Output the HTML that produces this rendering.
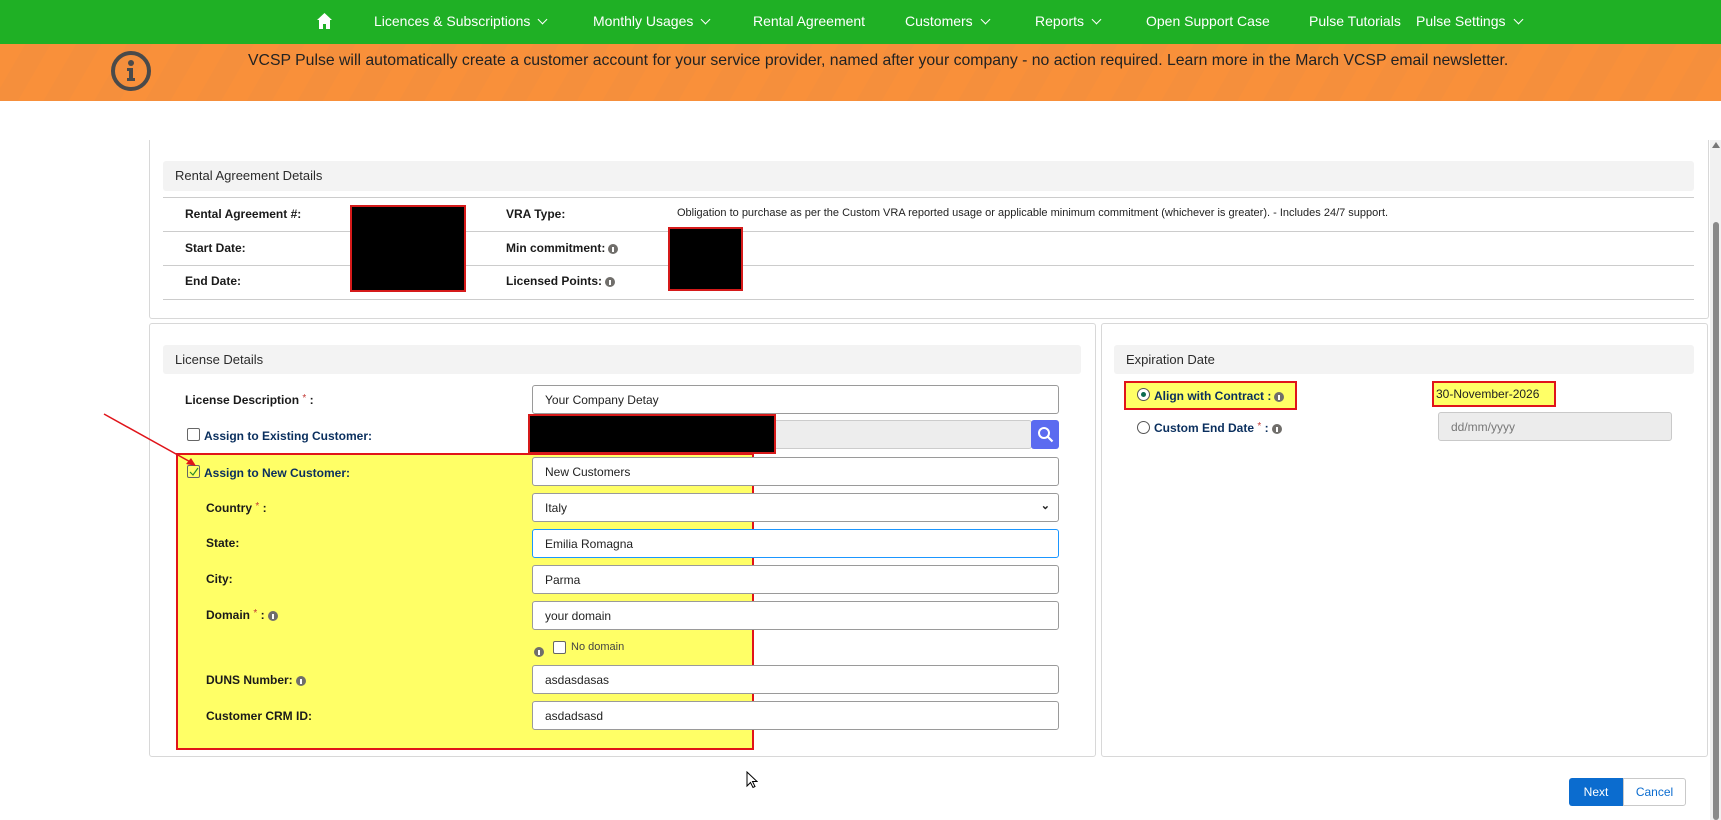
<!DOCTYPE html>
<html><head><meta charset="utf-8"><style>
*{box-sizing:border-box;margin:0;padding:0}
body{width:1721px;height:820px;position:relative;background:#fff;font-family:"Liberation Sans",sans-serif;overflow:hidden;color:#181818}
.a{position:absolute}
.nav{left:0;top:0;width:1721px;height:44px;background:#1fb025}
.nav span{position:absolute;top:13px;color:#fff;font-size:14px;white-space:nowrap}
.chev{display:inline-block;width:7px;height:7px;border-right:1.5px solid #fff;border-bottom:1.5px solid #fff;transform:rotate(45deg);margin-left:9px;position:relative;top:-3px}
.banner{left:0;top:44px;width:1721px;height:57px;background:repeating-linear-gradient(120deg,#f9903a 0 22px,#f58f3c 22px 44px)}
.panel{border:1px solid #d8d8d8;border-radius:3px;background:#fff}
.hdr{background:#f3f3f3;border-radius:3px;font-size:13px;color:#2b2b2b;padding-left:12px}
.lbl{font-size:12px;font-weight:bold;color:#1a1a1a;white-space:nowrap}
.blue{color:#0a2f5e}
.inp{left:532px;width:527px;height:29px;border:1px solid #9a9a9a;border-radius:3px;background:#fff;font-size:12px;padding:7px 12px;color:#222}
.line{height:1px;background:#ccc}
.req{color:#c23934;font-weight:normal;font-size:10px;vertical-align:top}
.i{display:inline-block;width:10px;height:10px;border-radius:50%;background:#706e6b;vertical-align:middle;margin-left:3px;position:relative}
.i:after{content:"";position:absolute;left:4px;top:3px;width:2px;height:5px;background:#fff}
.cb{width:13px;height:13px;border:1px solid #666;border-radius:2px;background:#fff}
</style></head><body>
<div class="a nav">
<svg class="a" style="left:317px;top:13px" width="15" height="16" viewBox="0 0 15 16"><path d="M7.5 0L0 7h2v9h4v-5h3v5h4V7h2z" fill="#fff"/></svg>
<span style="left:374px">Licences &amp; Subscriptions<i class="chev"></i></span>
<span style="left:593px">Monthly Usages<i class="chev"></i></span>
<span style="left:753px">Rental Agreement</span>
<span style="left:905px">Customers<i class="chev"></i></span>
<span style="left:1035px">Reports<i class="chev"></i></span>
<span style="left:1146px">Open Support Case</span>
<span style="left:1309px">Pulse Tutorials</span>
<span style="left:1416px">Pulse Settings<i class="chev"></i></span>
</div>
<div class="a banner"></div>
<svg class="a" style="left:110px;top:50px" width="42" height="42" viewBox="0 0 42 42"><circle cx="21" cy="21" r="18" fill="none" stroke="#4a4a4a" stroke-width="4"/><circle cx="21" cy="13" r="3" fill="#4a4a4a"/><path d="M17 18h6v10h2v3h-8v-3h2v-7h-2z" fill="#4a4a4a"/></svg>
<div class="a" style="left:248px;top:52px;font-size:15.8px;color:#222;white-space:nowrap">VCSP Pulse will automatically create a customer account for your service provider, named after your company - no action required. Learn more in the March VCSP email newsletter.</div>

<div class="a" style="left:1710px;top:140px;width:11px;height:680px;background:#f1f1f1"></div>
<div class="a" style="left:1713px;top:222px;width:6px;height:598px;background:#8a8a8a;border-radius:3px"></div>
<div class="a" style="left:1712px;top:142px;width:0;height:0;border-left:4px solid transparent;border-right:4px solid transparent;border-bottom:6px solid #777"></div>

<div class="a" style="left:149px;top:140px;width:1560px;height:179px;border-left:1px solid #d8d8d8;border-bottom:1px solid #d8d8d8;border-right:1px solid #d8d8d8;border-radius:0 0 3px 3px"></div>
<div class="a hdr" style="left:163px;top:161px;width:1531px;height:30px;line-height:30px">Rental Agreement Details</div>
<div class="a line" style="left:163px;top:197px;width:1531px"></div>
<div class="a line" style="left:163px;top:231px;width:1531px"></div>
<div class="a line" style="left:163px;top:265px;width:1531px"></div>
<div class="a line" style="left:163px;top:299px;width:1531px"></div>
<div class="a lbl" style="left:185px;top:207px">Rental Agreement #:</div>
<div class="a lbl" style="left:185px;top:241px">Start Date:</div>
<div class="a lbl" style="left:185px;top:274px">End Date:</div>
<div class="a lbl" style="left:506px;top:207px">VRA Type:</div>
<div class="a lbl" style="left:506px;top:241px">Min commitment:<i class="i"></i></div>
<div class="a lbl" style="left:506px;top:274px">Licensed Points:<i class="i"></i></div>
<div class="a" style="left:677px;top:207px;font-size:11px;color:#222;white-space:nowrap">Obligation to purchase as per the Custom VRA reported usage or applicable minimum commitment (whichever is greater). - Includes 24/7 support.</div>
<div class="a" style="left:350px;top:205px;width:116px;height:87px;background:#000;border:2px solid #d51a1a"></div>
<div class="a" style="left:668px;top:227px;width:75px;height:64px;background:#000;border:2px solid #d51a1a"></div>

<div class="a panel" style="left:149px;top:323px;width:947px;height:434px"></div>
<div class="a hdr" style="left:163px;top:345px;width:918px;height:29px;line-height:29px">License Details</div>
<div class="a panel" style="left:1101px;top:323px;width:607px;height:434px"></div>
<div class="a hdr" style="left:1114px;top:345px;width:580px;height:29px;line-height:29px">Expiration Date</div>

<div class="a" style="left:176px;top:453px;width:578px;height:297px;background:#ffff66;border:2px solid #e0141a"></div>

<div class="a lbl" style="left:185px;top:393px">License Description <span class="req">*</span> :</div>
<div class="a inp" style="top:385px">Your Company Detay</div>
<div class="a cb" style="left:187px;top:428px"></div>
<div class="a lbl blue" style="left:204px;top:429px">Assign to Existing Customer:</div>
<div class="a inp" style="top:420px;background:#ededed;border-color:#ccc;width:500px"></div>
<div class="a" style="left:1031px;top:420px;width:28px;height:29px;background:#5b6bf0;border-radius:3px"></div>
<svg class="a" style="left:1037px;top:426px" width="17" height="17" viewBox="0 0 17 17"><circle cx="7" cy="7" r="5" fill="none" stroke="#fff" stroke-width="2"/><path d="M10.5 10.5l5 5" stroke="#fff" stroke-width="2.2"/></svg>
<div class="a" style="left:528px;top:414px;width:248px;height:40px;background:#000;border:2px solid #d51a1a"></div>

<div class="a cb" style="left:187px;top:465px;background:#ffff66"></div>
<svg class="a" style="left:189px;top:467px" width="10" height="10"><path d="M1 5l3 3 5-7" stroke="#2a8a2a" fill="none" stroke-width="1.2"/></svg>
<div class="a lbl blue" style="left:204px;top:466px">Assign to New Customer:</div>
<div class="a inp" style="top:457px">New Customers</div>
<div class="a lbl" style="left:206px;top:501px">Country <span class="req">*</span> :</div>
<div class="a inp" style="top:493px">Italy<span style="position:absolute;right:8px;top:5px;font-size:11px;font-weight:bold">&#8964;</span></div>
<div class="a lbl" style="left:206px;top:536px">State:</div>
<div class="a inp" style="top:529px;border-color:#1b96ff">Emilia Romagna</div>
<div class="a lbl" style="left:206px;top:572px">City:</div>
<div class="a inp" style="top:565px">Parma</div>
<div class="a lbl" style="left:206px;top:608px">Domain <span class="req">*</span> :<i class="i"></i></div>
<div class="a inp" style="top:601px">your domain</div>
<div class="a" style="left:534px;top:643px"><i class="i" style="margin:0"></i></div>
<div class="a cb" style="left:553px;top:641px"></div>
<div class="a" style="left:571px;top:641px;font-size:11px;color:#444">No domain</div>
<div class="a lbl" style="left:206px;top:673px">DUNS Number:<i class="i"></i></div>
<div class="a inp" style="top:665px">asdasdasas</div>
<div class="a lbl" style="left:206px;top:709px">Customer CRM ID:</div>
<div class="a inp" style="top:701px">asdadsasd</div>

<svg class="a" style="left:100px;top:410px" width="100" height="60"><path d="M4 4L94 54" stroke="#e0141a" stroke-width="1.5"/><path d="M96 56l-10-2 5-6z" fill="#e0141a"/></svg>

<div class="a" style="left:1124px;top:381px;width:173px;height:29px;background:#ffff66;border:2px solid #e0141a"></div>
<div class="a" style="left:1137px;top:388px;width:13px;height:13px;border:1px solid #555;border-radius:50%;background:#fff"></div>
<div class="a" style="left:1141px;top:392px;width:5px;height:5px;border-radius:50%;background:#0b6b4f"></div>
<div class="a lbl blue" style="left:1154px;top:389px">Align with Contract :<i class="i"></i></div>
<div class="a" style="left:1432px;top:381px;width:124px;height:26px;background:#ffff66;border:2px solid #e0141a;font-size:12px;padding:4px 2px;color:#222">30-November-2026</div>
<div class="a" style="left:1137px;top:421px;width:13px;height:13px;border:1px solid #555;border-radius:50%;background:#fff"></div>
<div class="a lbl blue" style="left:1154px;top:421px">Custom End Date <span class="req">*</span> :<i class="i"></i></div>
<div class="a" style="left:1438px;top:412px;width:234px;height:29px;background:#ececec;border:1px solid #c9c9c9;border-radius:3px;font-size:12px;color:#777;padding:7px 12px">dd/mm/yyyy</div>

<div class="a" style="left:1569px;top:778px;width:54px;height:28px;background:#0b6ccf;border-radius:3px 0 0 3px;color:#fff;font-size:12px;text-align:center;line-height:28px">Next</div>
<div class="a" style="left:1623px;top:778px;width:63px;height:28px;border:1px solid #c9c9c9;border-radius:0 3px 3px 0;color:#0b6ccf;font-size:12px;text-align:center;line-height:26px">Cancel</div>

<svg class="a" style="left:746px;top:771px" width="12" height="18"><path d="M1 1v14l3.5-3.5 2.5 5 2-1-2.5-5H11z" fill="#fff" stroke="#000"/></svg>
</body></html>
